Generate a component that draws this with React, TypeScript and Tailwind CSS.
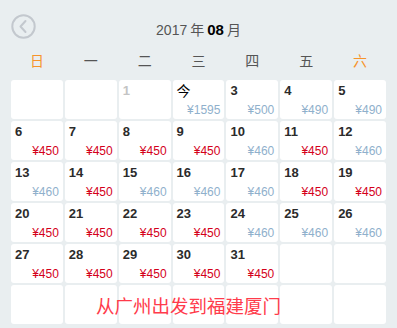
import React from 'react'

type Day = { d: string; price?: number; past?: boolean; today?: boolean }

const weekdays = ['日', '一', '二', '三', '四', '五', '六']

const prices: Record<number, number> = {
  3: 500, 4: 490, 5: 490,
  6: 450, 7: 450, 8: 450, 9: 450, 10: 460, 11: 450, 12: 460,
  13: 460, 14: 450, 15: 460, 16: 460, 17: 460, 18: 450, 19: 450,
  20: 450, 21: 450, 22: 450, 23: 450, 24: 460, 25: 460, 26: 460,
  27: 450, 28: 450, 29: 450, 30: 450, 31: 450,
}

function buildDays(): (Day | null)[] {
  const out: (Day | null)[] = [null, null, { d: '1', past: true }, { d: '今', price: 1595, today: true }]
  for (let i = 3; i <= 31; i++) out.push({ d: String(i), price: prices[i] })
  while (out.length < 42) out.push(null)
  return out
}

function Cell({ day }: { day: Day | null }) {
  if (!day) return <div className="h-[39px] bg-white rounded-[3px]" />
  const cheap = day.price === 450
  return (
    <div className="h-[39px] bg-white rounded-[3px] flex flex-col justify-between px-[4px] pt-[3px] pb-[2px]">
      <span
        className={
          day.past
            ? 'text-[13px] leading-[16px] font-bold text-[#c4c4c4]'
            : day.today
              ? 'text-[14px] leading-[16px] text-black'
              : 'text-[13px] leading-[16px] font-bold text-[#2b2b2b]'
        }
      >
        {day.d}
      </span>
      {day.price ? (
        <span className={'text-right text-[12px] leading-[14px] ' + (cheap ? 'text-[#d4001a]' : 'text-[#8fb0cc]')}>
          ¥{day.price}
        </span>
      ) : null}
    </div>
  )
}

export default function App() {
  const days = buildDays()
  return (
    <div
      className="w-[397px] h-[328px] bg-[#e9eef0] overflow-hidden"
      style={{ fontFamily: '"Liberation Sans", Arial, "Noto Sans CJK SC", sans-serif' }}
    >
      <div className="relative h-[48px] flex items-center justify-center">
        <div className="absolute left-[11px] top-[14px] w-[25px] h-[25px]">
          <svg viewBox="0 0 25 25" width="25" height="25">
            <circle cx="12.5" cy="12.5" r="11.2" fill="none" stroke="#c3c8ce" strokeWidth="2" />
            <path d="M14.5 7 L9.5 12.5 L14.5 18" fill="none" stroke="#c3c8ce" strokeWidth="2" strokeLinecap="round" strokeLinejoin="round" />
          </svg>
        </div>
        <div className="mt-[12px] text-[14px] text-[#555] flex items-baseline gap-[3px]">
          <span>2017</span>
          <span>年</span>
          <span className="font-bold text-black text-[15px]">08</span>
          <span>月</span>
        </div>
      </div>
      <div className="grid grid-cols-7 gap-[2px] px-[11px] h-[26px] mb-[6px] items-center">
        {weekdays.map((w, i) => (
          <div key={w} className={'text-center text-[14px] ' + (i === 0 || i === 6 ? 'text-[#f7932a]' : 'text-[#555]')}>
            {w}
          </div>
        ))}
      </div>
      <div className="relative grid grid-cols-7 gap-[2px] px-[11px]">
        {days.map((d, i) => (
          <Cell key={i} day={d} />
        ))}
        <div className="absolute left-0 right-0 bottom-0 h-[39px] flex items-center justify-center pt-[4px] pr-[20px] text-[18.5px] text-[#ff3b4b] pointer-events-none">
          从广州出发到福建厦门
        </div>
      </div>
    </div>
  )
}
